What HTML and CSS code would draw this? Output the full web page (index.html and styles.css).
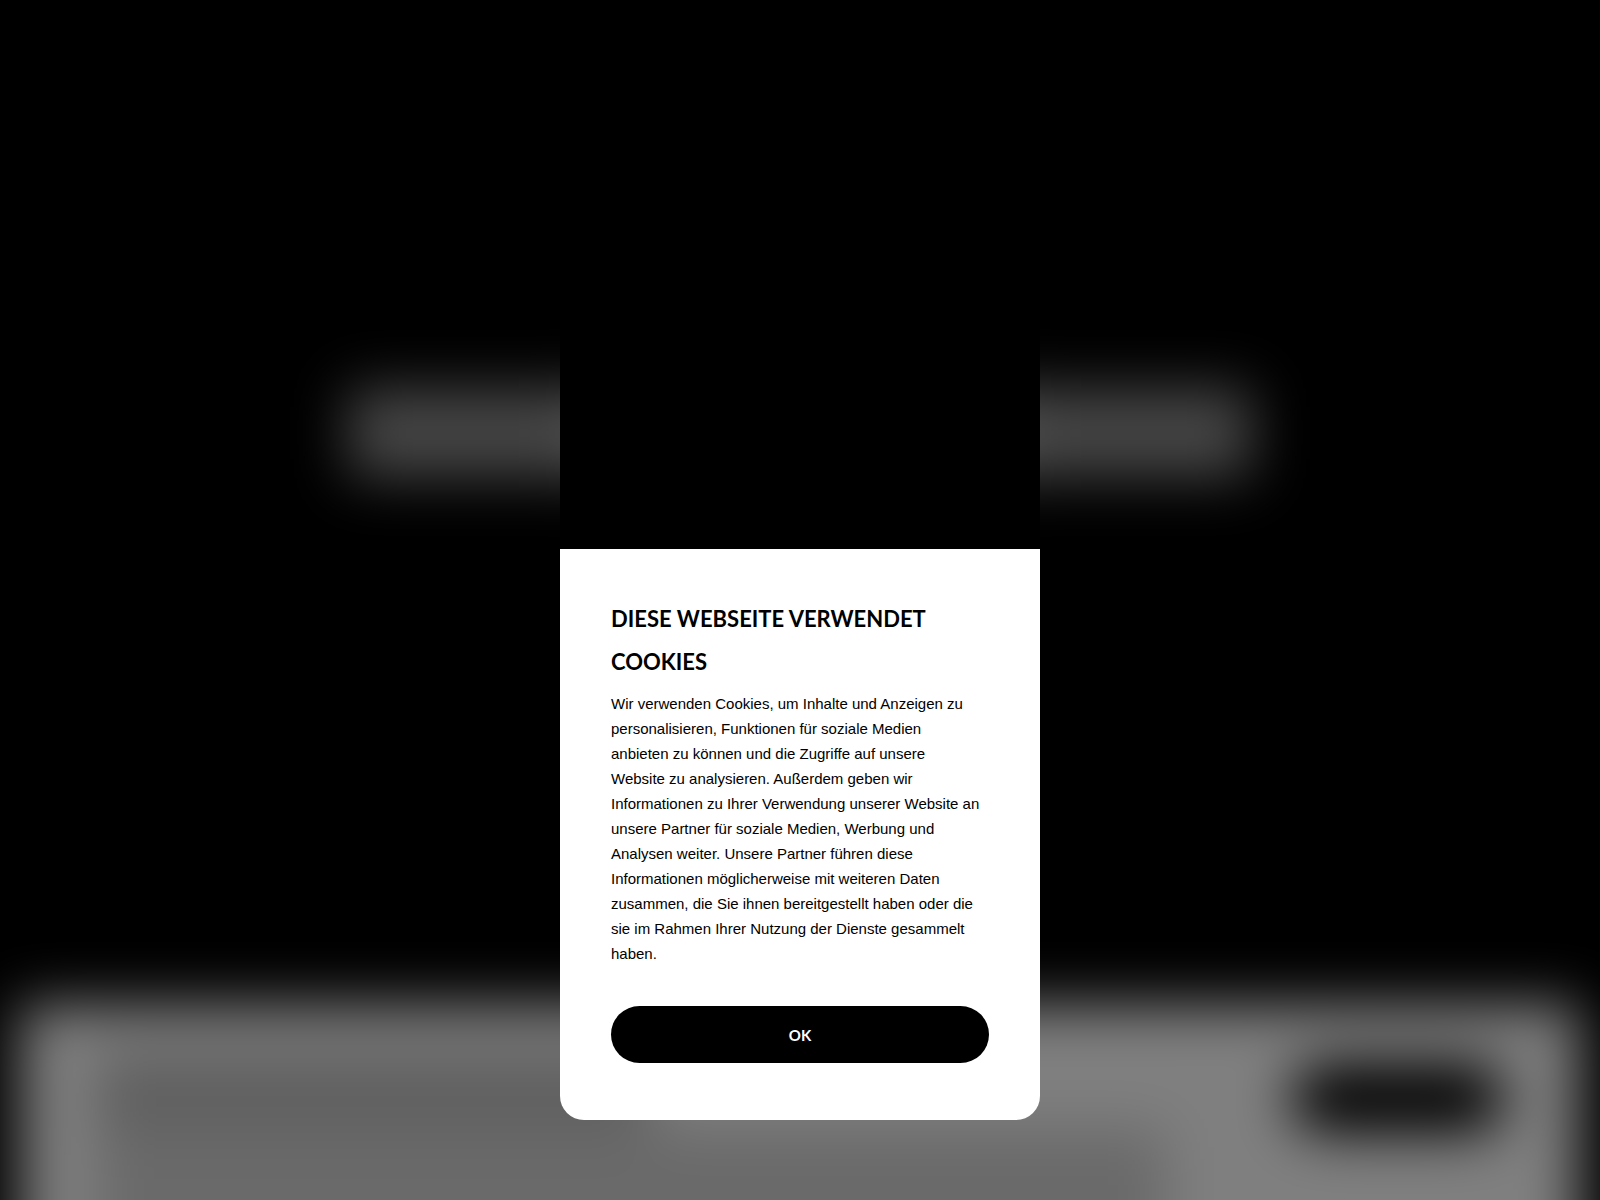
FILE: index.html
```
<!DOCTYPE html>
<html lang="de">
<head>
  <meta charset="UTF-8" />
  <meta name="viewport" content="width=device-width, initial-scale=1.0"/>
  <title>Cookies</title>
  <link rel="stylesheet" href="styles.css">
</head>
<body>

  <div class="page" aria-hidden="true">
    <div class="hero">
      <span class="word light"></span>
      <span class="word"></span>
      <span class="word light"></span>
    </div>
    <div class="banner">
      <div class="banner-text">
        <div class="banner-title"></div>
        <div class="banner-copy"></div>
      </div>
      <div class="banner-btn"></div>
    </div>
  </div>

  <div class="overlay">
    <div class="modal" role="dialog" aria-labelledby="cookieTitle">
      <div class="media"></div>
      <div class="content">
        <h2 id="cookieTitle">Diese Webseite verwendet<br>Cookies</h2>
        <p>
          Wir verwenden Cookies, um Inhalte und Anzeigen zu<br>
          personalisieren, Funktionen für soziale Medien<br>
          anbieten zu können und die Zugriffe auf unsere<br>
          Website zu analysieren. Außerdem geben wir<br>
          Informationen zu Ihrer Verwendung unserer Website an<br>
          unsere Partner für soziale Medien, Werbung und<br>
          Analysen weiter. Unsere Partner führen diese<br>
          Informationen möglicherweise mit weiteren Daten<br>
          zusammen, die Sie ihnen bereitgestellt haben oder die<br>
          sie im Rahmen Ihrer Nutzung der Dienste gesammelt<br>
          haben.
        </p>
        <button type="button">OK</button>
      </div>
    </div>
  </div>

</body>
</html>
```
FILE: styles.css
```
* {
  box-sizing: border-box;
  margin: 0;
  padding: 0;
}

body {
  font-family: 'Liberation Sans', Arial, sans-serif;
  background: #000;
  color: #000;
  min-height: 100vh;
  overflow: hidden;
}

/* page behind the dialog */
.page {
  height: 100vh;
  display: flex;
  flex-direction: column;
  justify-content: space-between;
  padding: 388px 20px 0;
  filter: blur(28px);
}

.hero {
  display: flex;
  width: 58%;
  height: 90px;
  margin: 0 auto;
}

.word {
  flex: 2;
  background: #aaa;
}

.word.light {
  flex: 1;
  background: #8c8c8c;
}

/* runs past the bottom edge so the blur stays even there */
.banner {
  display: flex;
  justify-content: space-between;
  height: 296px;
  margin-bottom: -100px;
  padding: 48px 76px 0 76px;
  background: #fff;
}

.banner-text {
  width: 76%;
}

.banner-title {
  width: 52%;
  height: 76px;
  background: #c0c0c0;
}

.banner-copy {
  height: 172px;
  background: #d4d4d4;
}

.banner-btn {
  width: 212px;
  height: 68px;
  margin-top: 12px;
  border-radius: 34px;
  background: #000;
}

/* cookie dialog */
.overlay {
  position: fixed;
  inset: 0;
  display: flex;
  justify-content: center;
  align-items: center;
  background: rgba(0, 0, 0, 0.5);
}

.modal {
  width: 480px;
  max-width: 100%;
}

.media {
  height: 469px;
  border-radius: 24px 24px 0 0;
  background: #000;
}

.content {
  padding: 48px 51px 57px;
  border-radius: 0 0 24px 24px;
  background: #fff;
}

.content h2 {
  font-family: Lato, 'Liberation Sans', sans-serif;
  font-size: 22px;
  line-height: 43px;
  text-transform: uppercase;
  white-space: nowrap;
}

.content p {
  margin: 8px 0 40px;
  font-size: 15px;
  line-height: 25px;
  white-space: nowrap;
}

.content button {
  display: block;
  width: 100%;
  height: 57px;
  border: none;
  border-radius: 29px;
  background: #000;
  color: #fff;
  font-family: Lato, 'Liberation Sans', sans-serif;
  font-size: 15px;
  font-weight: bold;
  cursor: pointer;
}
```
